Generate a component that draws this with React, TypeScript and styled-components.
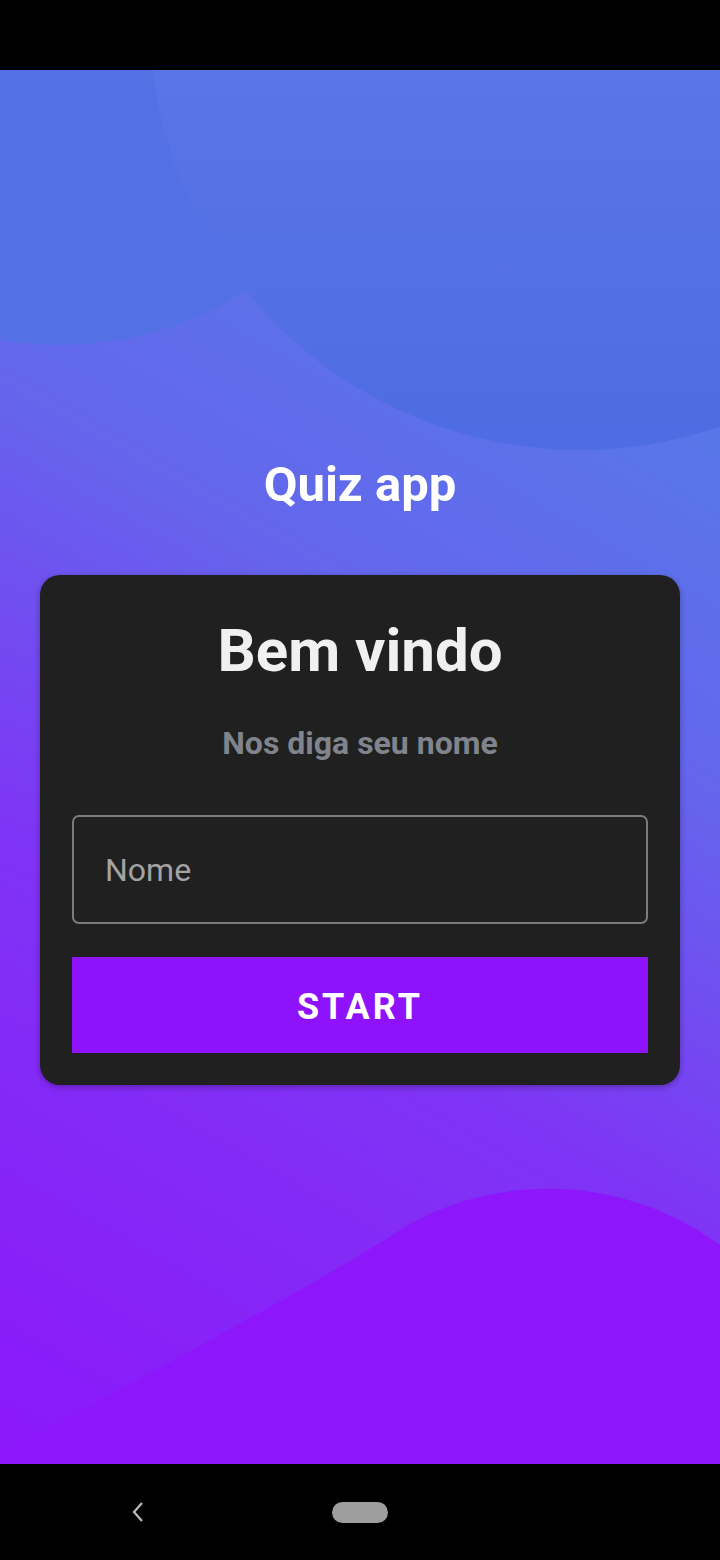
import React from "react";
import styled, { createGlobalStyle } from "styled-components";

const Global = createGlobalStyle`
  html, body { margin: 0; padding: 0; background: #000; }
  body { font-family: Roboto, "Noto Sans", sans-serif; }
  * { box-sizing: border-box; }
`;

const Screen = styled.div`
  width: 720px;
  height: 1560px;
  display: flex;
  flex-direction: column;
  background: #000;
`;

const StatusBar = styled.div`
  height: 70px;
  flex: none;
  background: #000;
`;

const Main = styled.main`
  position: relative;
  flex: 1;
  overflow: hidden;
  background: linear-gradient(30deg, #8c17fa 0%, #7f34f5 35%, #6466ec 60%, #4d88e6 100%);
`;

const Backdrop = styled.svg`
  position: absolute;
  inset: 0;
  width: 100%;
  height: 100%;
`;

const Content = styled.div`
  position: relative;
  display: flex;
  flex-direction: column;
  align-items: center;
  padding: 388px 40px 0;
`;

const Title = styled.h1`
  margin: 0;
  font-family: Roboto, sans-serif;
  font-weight: 700;
  font-size: 49px;
  line-height: 54px;
  color: #ffffff;
`;

const Card = styled.section`
  margin-top: 63px;
  width: 640px;
  background: #202020;
  border-radius: 20px;
  padding: 41px 32px 32px;
  display: flex;
  flex-direction: column;
  align-items: center;
  box-shadow: 0 2px 6px rgba(0, 0, 0, 0.3);
`;

const Heading = styled.h2`
  margin: 0;
  font-family: Roboto, sans-serif;
  font-weight: 700;
  font-size: 60px;
  line-height: 70px;
  color: #f0f0f0;
`;

const Subtitle = styled.p`
  margin: 38px 0 0;
  font-family: Roboto, sans-serif;
  font-weight: 700;
  font-size: 32px;
  line-height: 38px;
  color: #80848c;
`;

const NameInput = styled.input`
  margin-top: 53px;
  width: 100%;
  height: 109px;
  border: 2px solid #7c7c7c;
  border-radius: 7px;
  background: transparent;
  padding: 0 31px;
  font-family: Roboto, sans-serif;
  font-size: 32px;
  color: #f0f0f0;
  outline: none;
  &::placeholder { color: #a3a3a3; }
`;

const StartButton = styled.button`
  margin-top: 33px;
  width: 100%;
  height: 96px;
  border: none;
  border-radius: 0;
  background: #8e12fc;
  color: #ffffff;
  font-family: Roboto, sans-serif;
  font-weight: 700;
  font-size: 36px;
  letter-spacing: 3px;
  padding: 4px 0 0;
  cursor: pointer;
`;

const NavBar = styled.nav`
  height: 96px;
  flex: none;
  background: #000;
  display: grid;
  grid-template-columns: 276px 168px 276px;
  align-items: center;
  justify-items: center;
`;

const HomePill = styled.div`
  width: 56px;
  height: 21px;
  border-radius: 11px;
  background: #9e9e9e;
`;

export default function App() {
  return (
    <>
      <Global />
      <Screen>
        <StatusBar />
        <Main>
          <Backdrop viewBox="0 0 720 1394" preserveAspectRatio="none">
            <defs>
              <linearGradient id="bigc" x1="0" y1="0" x2="0" y2="1">
                <stop offset="0" stopColor="#6880e9" />
                <stop offset="1" stopColor="#4e6ce3" />
              </linearGradient>
            </defs>
            <circle cx="60" cy="-70" r="345" fill="#5470e5" />
            <circle cx="580" cy="-50" r="430" fill="url(#bigc)" />
            <path
              d="M0,1394 L0,1388 C150,1300 300,1225 400,1160 C480,1110 610,1095 720,1175 L720,1394 Z"
              fill="#8e16fb"
            />
          </Backdrop>
          <Content>
            <Title>Quiz app</Title>
            <Card>
              <Heading>Bem vindo</Heading>
              <Subtitle>Nos diga seu nome</Subtitle>
              <NameInput placeholder="Nome" />
              <StartButton>START</StartButton>
            </Card>
          </Content>
        </Main>
        <NavBar>
          <svg width="16" height="24" viewBox="0 0 16 24">
            <path d="M12 3 L4 12 L12 21" fill="none" stroke="#bdbdbd" strokeWidth="2.2" />
          </svg>
          <HomePill />
          <span />
        </NavBar>
      </Screen>
    </>
  );
}
